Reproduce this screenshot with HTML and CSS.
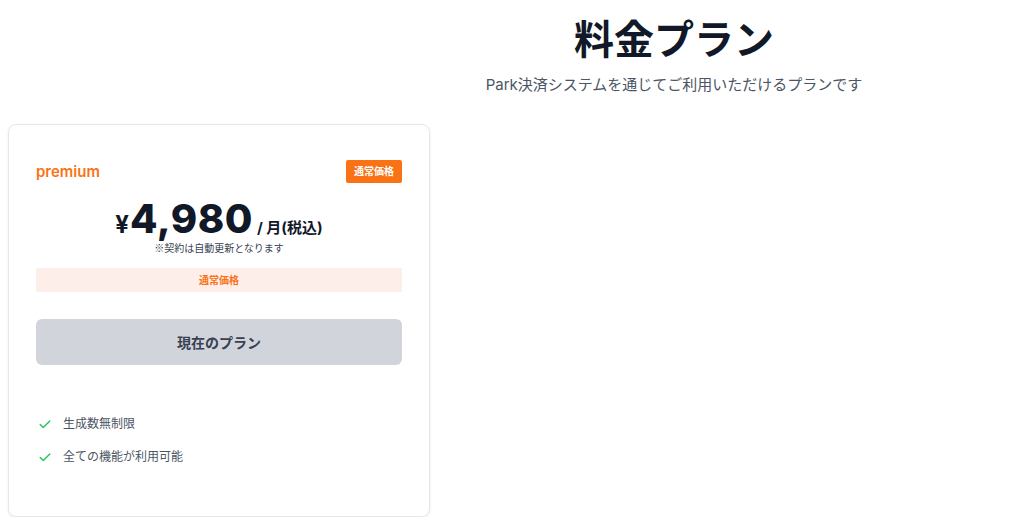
FILE: index.html
```html
<!DOCTYPE html>
<html lang="ja">
<head>
<meta charset="utf-8">
<link rel="stylesheet" href="styles.css">
</head>
<body>
<header class="hero">
  <h1 class="title">料金プラン</h1>
  <p class="subtitle">Park決済システムを通じてご利用いただけるプランです</p>
</header>
<section class="card">
  <div class="card-head">
    <span class="plan-name">premium</span>
    <span class="badge">通常価格</span>
  </div>
  <div class="price">
    <span class="yen">¥</span><span class="amount">4,980</span><span class="per">/ 月(税込)</span>
  </div>
  <p class="note">※契約は自動更新となります</p>
  <div class="banner">通常価格</div>
  <button class="current">現在のプラン</button>
  <ul class="features">
    <li><svg class="check" viewBox="0 0 16 16" width="14" height="14"><path d="M2.5 8.5l3.5 3.5 7.5-7.5" fill="none" stroke="#22c55e" stroke-width="1.6" stroke-linecap="round" stroke-linejoin="round"/></svg>生成数無制限</li>
    <li><svg class="check" viewBox="0 0 16 16" width="14" height="14"><path d="M2.5 8.5l3.5 3.5 7.5-7.5" fill="none" stroke="#22c55e" stroke-width="1.6" stroke-linecap="round" stroke-linejoin="round"/></svg>全ての機能が利用可能</li>
  </ul>
</section>
</body>
</html>
```

FILE: styles.css
```css
* { box-sizing: border-box; }
body {
  margin: 0;
  background: #ffffff;
  font-family: "Inter", "Noto Sans CJK JP", sans-serif;
  color: #111827;
}
.hero {
  margin-left: 324px;
  width: 700px;
  text-align: center;
  padding-top: 14px;
}
.title {
  margin: 0;
  font-size: 40px;
  line-height: 52px;
  font-weight: 700;
  color: #111827;
}
.subtitle {
  margin: 9px 0 0;
  font-size: 15px;
  line-height: 20px;
  color: #4b5563;
}
.card {
  margin: 29px 0 0 8px;
  width: 422px;
  height: 393px;
  border: 1px solid #e5e7eb;
  border-radius: 8px;
  box-shadow: 0 1px 3px rgba(0,0,0,0.08);
  padding: 35px 27px 0 27px;
}
.card-head {
  display: flex;
  justify-content: space-between;
  align-items: center;
}
.plan-name {
  color: #f97316;
  font-size: 15px;
  font-weight: 600;
}
.badge {
  background: #f97316;
  color: #ffffff;
  font-size: 10px;
  font-weight: 700;
  padding: 0 8px;
  height: 23px;
  line-height: 23px;
  border-radius: 2px;
}
.price {
  margin-top: 16px;
  text-align: center;
  font-size: 0;
  line-height: 1;
  color: #111827;
}
.price span { line-height: 1; }
.yen { font-size: 24px; font-weight: 700; margin-right: 1px; }
.amount { font-size: 40px; font-weight: 800; letter-spacing: 0.5px; }
.per { font-size: 15px; font-weight: 700; margin-left: 4px; }
.note {
  margin: 2px 0 0;
  text-align: center;
  font-family: "Noto Sans CJK JP", sans-serif;
  font-size: 10px;
  line-height: 14px;
  color: #374151;
}
.banner {
  margin-top: 13px;
  height: 24px;
  line-height: 24px;
  background: #fdeee9;
  color: #f97316;
  font-size: 10px;
  font-weight: 700;
  text-align: center;
  border-radius: 2px;
}
.current {
  display: block;
  width: 100%;
  margin-top: 27px;
  height: 46px;
  border: none;
  border-radius: 6px;
  background: #d1d5db;
  color: #374151;
  font-family: inherit;
  font-size: 14px;
  font-weight: 700;
}
.features {
  list-style: none;
  margin: 50px 0 0;
  padding: 0;
}
.features li {
  display: flex;
  align-items: center;
  font-size: 12px;
  line-height: 18px;
  color: #4b5563;
  margin-bottom: 15px;
}
.check { margin: 0 11px 0 2px; flex: none; }
```
